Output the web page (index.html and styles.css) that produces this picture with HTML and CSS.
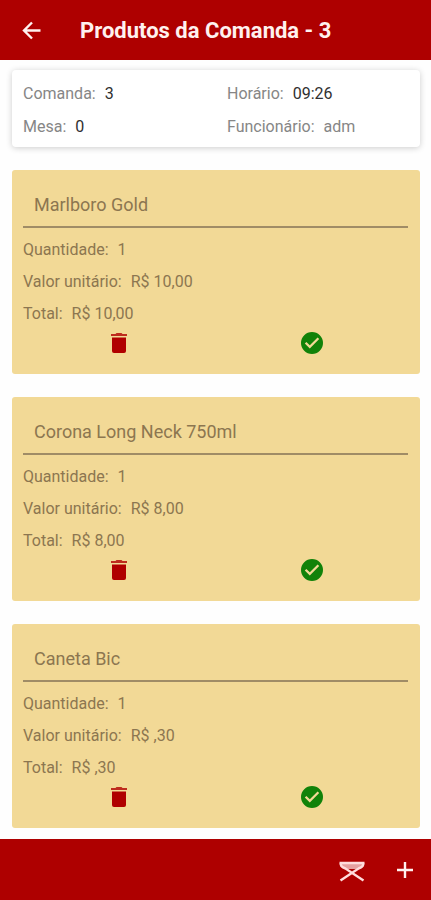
FILE: index.html
```html
<!DOCTYPE html>
<html lang="pt-BR">
<head>
<meta charset="utf-8">
<meta name="viewport" content="width=device-width, initial-scale=1">
<title>Produtos da Comanda - 3</title>
<link rel="stylesheet" href="styles.css">
</head>
<body>
<svg width="0" height="0" class="sprite" aria-hidden="true">
  <symbol id="trash" viewBox="0 0 24 24"><path d="M5 6.500h14v13.500q0 2-2 2H7q-2 0-2-2z"/><path d="M4 3h4.500l1-1h5l1 1H20v2H4z" opacity=".8"/></symbol>
  <symbol id="check" viewBox="0 0 24 24"><path d="M12 1a11 11 0 1 0 0 22 11 11 0 0 0 0-22zM9.800 17.500l-5-5 1.600-1.600 3.400 3.400 7.800-7.800 1.600 1.600z"/></symbol>
</svg>
<header class="bar top-bar">
  <button class="icon-button back" aria-label="Voltar">
    <svg viewBox="0 0 24 24" class="icon line"><path d="M20.500 11.500H4M12 3.500l-8 8 8 8"/></svg>
  </button>
  <h1>Produtos da Comanda - 3</h1>
</header>
<main>
  <section class="summary">
    <p>Comanda: <strong>3</strong></p>
    <p>Horário: <strong>09:26</strong></p>
    <p>Mesa: <strong>0</strong></p>
    <p>Funcionário: <span>adm</span></p>
  </section>
  <article class="product">
    <h2>Marlboro Gold</h2>
    <p>Quantidade: <span>1</span></p>
    <p>Valor unitário: <span>R$ 10,00</span></p>
    <p>Total: <span>R$ 10,00</span></p>
    <div class="actions">
      <button class="icon-button remove" aria-label="Excluir"><svg class="icon"><use href="#trash"/></svg></button>
      <button class="icon-button confirm" aria-label="Confirmar"><svg class="icon"><use href="#check"/></svg></button>
    </div>
  </article>
  <article class="product">
    <h2>Corona Long Neck 750ml</h2>
    <p>Quantidade: <span>1</span></p>
    <p>Valor unitário: <span>R$ 8,00</span></p>
    <p>Total: <span>R$ 8,00</span></p>
    <div class="actions">
      <button class="icon-button remove" aria-label="Excluir"><svg class="icon"><use href="#trash"/></svg></button>
      <button class="icon-button confirm" aria-label="Confirmar"><svg class="icon"><use href="#check"/></svg></button>
    </div>
  </article>
  <article class="product">
    <h2>Caneta Bic</h2>
    <p>Quantidade: <span>1</span></p>
    <p>Valor unitário: <span>R$ ,30</span></p>
    <p>Total: <span>R$ ,30</span></p>
    <div class="actions">
      <button class="icon-button remove" aria-label="Excluir"><svg class="icon"><use href="#trash"/></svg></button>
      <button class="icon-button confirm" aria-label="Confirmar"><svg class="icon"><use href="#check"/></svg></button>
    </div>
  </article>
</main>
<footer class="bar bottom-bar">
  <button class="icon-button table" aria-label="Mesa">
    <svg viewBox="0 0 28 24" class="icon"><path class="seat" d="M2 5h24v3q-2 3-6 3H8q-4 0-6-3z"/><path class="frame" d="M1.500 5h25M2.500 5q0 4 5 5.500L25.500 22.500M25.500 5q0 4-5 5.500L2.500 22.500"/></svg>
  </button>
  <button class="icon-button" aria-label="Adicionar">
    <svg viewBox="0 0 24 24" class="icon line plus"><path d="M12 4v16M4 12h16"/></svg>
  </button>
</footer>
</body>
</html>
```
FILE: styles.css
```css
* { box-sizing: border-box; }
body {
  margin: 0;
  min-height: 100vh;
  display: flex;
  flex-direction: column;
  background: #fefefe;
  color: #868686;
  font: 16px/32px Roboto, sans-serif;
}
h1, h2, p { margin: 0; }
.sprite { position: absolute; }
.bar {
  display: flex;
  align-items: center;
  background: #ae0000;
  color: #fff1ef;
}
.top-bar { height: 60px; padding: 2px 20px 0; gap: 36px; }
h1 { font-size: 22px; font-weight: 700; line-height: 32px; }
.icon-button {
  display: block;
  padding: 0;
  border: 0;
  background: none;
  color: inherit;
}
.icon { display: block; width: 24px; height: 24px; fill: currentColor; }
.line { fill: none; stroke: currentColor; stroke-width: 2.400; }
main {
  flex: 1;
  display: flex;
  flex-direction: column;
  gap: 23px;
  padding: 10px 11px 11px 12px;
}
.summary {
  display: grid;
  grid-template-columns: 1fr 1fr;
  row-gap: 1px;
  padding: 8px 0 4px;
  border-radius: 4px;
  background: #fff;
  box-shadow: 0 1px 6px #0003;
}
.summary p { padding-left: 11px; }
.summary strong { font-weight: 400; color: #303030; }
p { white-space: nowrap; }
p > * { margin-left: 5px; }
.product {
  padding: 12px 12px 19px 11px;
  border-radius: 3px;
  background: #f2d996;
  color: #8c7650;
}
h2 {
  padding: 7px 11px 5px;
  margin-bottom: 6px;
  border-bottom: 2px solid #a08c66;
  font-size: 18px;
  font-weight: 400;
  line-height: 32px;
}
.actions {
  display: grid;
  grid-template-columns: 1fr 1fr;
  justify-items: center;
  padding-top: 1px;
}
.remove { color: #b00000; }
.confirm { color: #118209; }
.bottom-bar {
  justify-content: flex-end;
  height: 61px;
  padding: 0 14px;
  gap: 27px;
}
.table .icon { width: 28px; }
.seat { fill: #e6a0a0; }
.frame { fill: none; stroke: #ffdcdc; stroke-width: 2.400; }
```
